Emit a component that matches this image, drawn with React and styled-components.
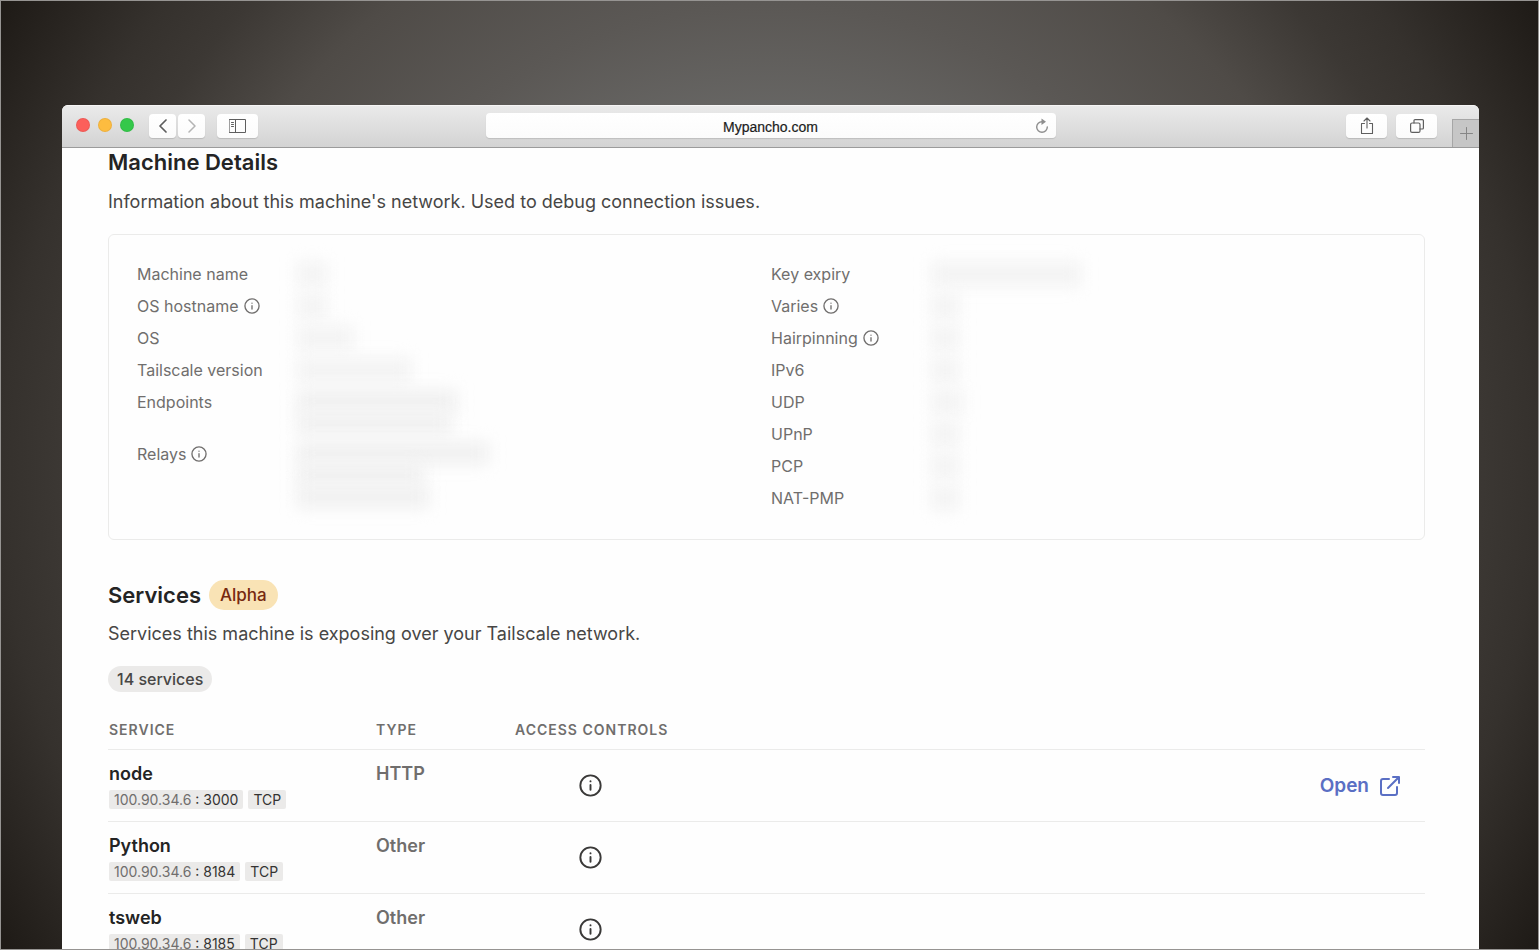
import React from "react";
import styled, { createGlobalStyle } from "styled-components";

const GlobalStyle = createGlobalStyle`
  *, *::before, *::after { box-sizing: border-box; }
  body { margin: 0; background: #2b2724; }
  button, input { font: inherit; color: inherit; }
`;

const Desktop = styled.div`
  display: flex;
  height: 100vh;
  overflow: hidden;
  padding: 104px 59px 0 61px;
  border: 1px solid #969492;
  background: radial-gradient(circle at center, #676664 40%, #5b5855 52%, #4f4b47 67%, #3c3834 78%, #35312d 85%, #1e1a16 100%);
  font-family: Inter, "Liberation Sans", sans-serif;
  color: #242424;
`;

const Window = styled.main`
  flex: 1;
  min-width: 0;
  border-radius: 6px 6px 0 0;
  background: #fefefe;
  overflow: hidden;
`;

const TitleBar = styled.header`
  display: grid;
  grid-template-columns: minmax(0, 1fr) minmax(0, 570px) minmax(0, 1fr);
  height: 43px;
  border-top: 1px solid #f6f5f5;
  border-bottom: 1px solid #9b9b9b;
  background: linear-gradient(#eaeaea, #d3d3d3);
`;

const BarGroup = styled.div`
  display: flex;
  align-items: flex-start;
  justify-content: ${(p) => (p.$end ? "flex-end" : "flex-start")};
  padding: ${(p) => (p.$end ? "0" : "8px 0 0 14px")};
`;

const Lights = styled.div`
  display: flex;
  gap: 8px;
  padding-top: 4px;
  margin-right: 15px;
`;

const Light = styled.button`
  width: 14px;
  height: 14px;
  padding: 0;
  border: 1px solid rgba(0, 0, 0, 0.06);
  border-radius: 50%;
  background: ${(p) => p.$color};
`;

const ToolButton = styled.button`
  display: flex;
  align-items: center;
  justify-content: center;
  width: ${(p) => (p.$wide ? 41 : 27)}px;
  height: 24px;
  padding: 0;
  margin: ${(p) => p.$margin || "0"};
  border: 0;
  border-radius: 4px;
  background: linear-gradient(#fff, #fbfbfb);
  box-shadow: 0 1px 1px rgba(0, 0, 0, 0.14);
  color: ${(p) => (p.$dim ? "#b4b4b4" : "#5e5e5e")};
`;

const NewTab = styled.button`
  display: flex;
  align-items: center;
  justify-content: center;
  width: 27px;
  height: 28px;
  padding: 0;
  margin: 13px 0 0 15px;
  border: 1px solid #a6a6a6;
  border-width: 1px 0 0 1px;
  background: #c6c6c6;
  color: #858585;
`;

const AddressBar = styled.div`
  display: flex;
  align-items: center;
  height: 25px;
  margin-top: 7px;
  border-radius: 4px;
  background: linear-gradient(#fff, #fbfbfb);
  box-shadow: 0 1px 1px rgba(0, 0, 0, 0.12);
`;

const Address = styled.input`
  flex: 1;
  min-width: 0;
  padding: 2px 0 0 28px;
  border: 0;
  outline: 0;
  background: none;
  text-align: center;
  font-family: "Liberation Sans", Arial, sans-serif;
  font-size: 14px;
  line-height: 18px;
  color: #1c1c1c;
  -webkit-text-stroke: 0.2px #1c1c1c;
`;

const Reload = styled.button`
  display: flex;
  justify-content: center;
  width: 28px;
  padding: 0;
  border: 0;
  background: none;
  color: #8e8e8e;
`;

const Content = styled.div`
  padding: 0 54px 0 46px;
`;

const Section = styled.section`
  margin-top: ${(p) => p.$top || 0}px;
`;

const Heading = styled.div`
  display: flex;
  align-items: center;
  gap: 8px;
`;

const Title = styled.h2`
  margin: 0;
  font-size: 22px;
  font-weight: 600;
  line-height: 28px;
`;

const Badge = styled.span`
  padding: 0 11px;
  border-radius: 15px;
  background: #f9e3b5;
  color: #77290f;
  font-size: 17px;
  font-weight: 500;
  line-height: 30px;
`;

const Description = styled.p`
  margin: ${(p) => p.$top}px 0 18px;
  color: #474645;
  font-size: 18px;
  line-height: 28px;
`;

const Card = styled.div`
  display: grid;
  grid-template-columns: 1fr 1fr;
  gap: 9px;
  padding: 27px 28px 29px;
  border: 1px solid #ebebea;
  border-radius: 6px;
`;

const DetailList = styled.dl`
  display: flex;
  flex-direction: column;
  gap: 8px;
  margin: 0;
`;

const Detail = styled.div`
  display: flex;
`;

const Label = styled.dt`
  display: flex;
  align-items: center;
  gap: 5px;
  flex: 0 0 160px;
  height: 24px;
  color: #706e6d;
  font-size: 16px;
  line-height: 24px;
`;

const Value = styled.dd`
  display: flex;
  flex-direction: column;
  margin: 0;
`;

const Redacted = styled.span`
  width: ${(p) => p.$width}px;
  height: ${(p) => (p.$multi ? 22 : 24)}px;
  background: ${(p) => (p.$multi ? "#f0f0f0" : "#f3f3f3")};
  filter: blur(8px);
`;

const CountPill = styled.span`
  display: inline-block;
  vertical-align: top;
  padding: 0 9px;
  border-radius: 13px;
  background: #ebeae9;
  color: #474645;
  font-size: 16px;
  font-weight: 500;
  line-height: 26px;
`;

const Table = styled.table`
  width: 100%;
  margin-top: 16px;
  border-collapse: separate;
  border-spacing: 0;
  table-layout: fixed;
`;

const HeadCell = styled.th`
  width: ${(p) => p.$width || "auto"};
  height: 42px;
  padding: 2px 0 0 1px;
  border-bottom: 1px solid #ebebea;
  color: #706e6d;
  text-align: left;
  font-size: 14px;
  font-weight: 600;
  letter-spacing: 1px;
  line-height: 20px;
  white-space: nowrap;
`;

const Cell = styled.td`
  height: 72px;
  padding: ${(p) => (p.$middle ? "0" : "12px 0 0 1px")};
  border-bottom: 1px solid #ebebea;
  vertical-align: ${(p) => (p.$middle ? "middle" : "top")};
  text-align: ${(p) => p.$align || "left"};
`;

const ServiceName = styled.div`
  font-size: 18px;
  font-weight: 600;
  line-height: 24px;
`;

const ServiceType = styled(ServiceName)`
  color: #706e6d;
`;

const Tags = styled.div`
  display: flex;
  gap: 5px;
  margin-top: 4px;
`;

const Tag = styled.span`
  padding: 0 5px;
  border-radius: 2px;
  background: #ebeae9;
  color: #343332;
  font-size: 14px;
  line-height: 19px;
  white-space: pre;
`;

const Host = styled.span`
  color: #706e6d;
`;

const InfoButton = styled.button`
  display: inline-flex;
  vertical-align: middle;
  padding: 0;
  border: 0;
  background: none;
  color: ${(p) => (p.$dark ? "#3a3938" : "#706e6d")};
`;

const OpenLink = styled.a`
  display: inline-flex;
  align-items: center;
  gap: 10px;
  padding-right: 24px;
  color: #5a6fc4;
  font-size: 19px;
  font-weight: 600;
  line-height: 24px;
  text-decoration: none;
`;

const Icon = ({ size = 16, width, stroke = 1, box, children }) => (
  <svg
    width={width || size}
    height={size}
    viewBox={box || `0 0 ${width || size} ${size}`}
    fill="none"
    stroke="currentColor"
    strokeWidth={stroke}
    strokeLinecap="round"
    strokeLinejoin="round"
    aria-hidden="true"
  >
    {children}
  </svg>
);

const Info = ({ size, dark, label }) => (
  <InfoButton type="button" aria-label={label} $dark={dark}>
    <Icon size={size} box="0 0 24 24" stroke={2}>
      <circle cx="12" cy="12" r="10.6" />
      <path d="M12 11.5v5M12 7.6v.1" />
    </Icon>
  </InfoButton>
);

const leftDetails = [
  { label: "Machine name", bars: [30] },
  { label: "OS hostname", info: true, bars: [30] },
  { label: "OS", bars: [56] },
  { label: "Tailscale version", bars: [114] },
  { label: "Endpoints", multi: true, bars: [160, 154] },
  { label: "Relays", info: true, multi: true, bars: [192, 126, 132] },
];

const rightDetails = [
  { label: "Key expiry", bars: [150] },
  { label: "Varies", info: true, bars: [28] },
  { label: "Hairpinning", info: true, bars: [28] },
  { label: "IPv6", bars: [28] },
  { label: "UDP", bars: [32] },
  { label: "UPnP", bars: [28] },
  { label: "PCP", bars: [28] },
  { label: "NAT-PMP", bars: [28] },
];

const services = [
  { name: "node", type: "HTTP", port: "3000", open: true },
  { name: "Python", type: "Other", port: "8184" },
  { name: "tsweb", type: "Other", port: "8185" },
];

const Details = ({ items }) => (
  <DetailList>
    {items.map((item) => (
      <Detail key={item.label}>
        <Label>
          {item.label}
          {item.info && <Info size={16} label={`About ${item.label}`} />}
        </Label>
        <Value>
          {item.bars.map((width, i) => (
            <Redacted key={i} $width={width} $multi={item.multi} />
          ))}
        </Value>
      </Detail>
    ))}
  </DetailList>
);

export default function App() {
  return (
    <>
      <GlobalStyle />
      <Desktop>
        <Window>
          <TitleBar>
            <BarGroup>
              <Lights>
                <Light $color="#fc5f5b" aria-label="Close" />
                <Light $color="#fdbc40" aria-label="Minimize" />
                <Light $color="#34c84a" aria-label="Zoom" />
              </Lights>
              <ToolButton aria-label="Back">
                <Icon width={10} size={14} stroke={1.7}>
                  <path d="M8 1 2 7l6 6" />
                </Icon>
              </ToolButton>
              <ToolButton aria-label="Forward" $dim $margin="0 12px 0 2px">
                <Icon width={10} size={14} stroke={1.5}>
                  <path d="m2 1 6 6-6 6" />
                </Icon>
              </ToolButton>
              <ToolButton aria-label="Sidebar" $wide>
                <Icon width={17} size={14}>
                  <path d="M.5.5h16v13H.5zM6.5.5v13M2.5 3.5h2M2.5 5.5h2M2.5 7.5h2" />
                </Icon>
              </ToolButton>
            </BarGroup>
            <AddressBar>
              <Address aria-label="Address" defaultValue="Mypancho.com" />
              <Reload aria-label="Reload">
                <Icon width={14} size={16} stroke={1.4}>
                  <path d="M7 3.700A5.300 5.300 0 1 0 12.300 9" />
                  <path d="M6.500.5v6.400l4.500-3.200z" fill="currentColor" stroke="none" />
                </Icon>
              </Reload>
            </AddressBar>
            <BarGroup $end>
              <ToolButton aria-label="Share" $wide $margin="8px 9px 0 0">
                <Icon width={14} size={18} stroke={1.1}>
                  <path d="M4.5 6.500h-3v10h11v-10h-3M7 11V1M4 4l3-3 3 3" />
                </Icon>
              </ToolButton>
              <ToolButton aria-label="Show all tabs" $wide $margin="8px 0 0 0">
                <Icon width={14} size={14} stroke={1.2}>
                  <rect x=".6" y="4" width="9.400" height="9.400" rx="1.500" />
                  <path d="M4 4V1.600a1 1 0 0 1 1-1h7.400a1 1 0 0 1 1 1V9a1 1 0 0 1-1 1H10" />
                </Icon>
              </ToolButton>
              <NewTab aria-label="New tab">
                <Icon size={13}>
                  <path d="M6.500.5v12M.5 6.500h12" />
                </Icon>
              </NewTab>
            </BarGroup>
          </TitleBar>

          <Content>
            <Section>
              <Title>Machine Details</Title>
              <Description $top={12}>
                Information about this machine's network. Used to debug connection issues.
              </Description>
              <Card>
                <Details items={leftDetails} />
                <Details items={rightDetails} />
              </Card>
            </Section>

            <Section $top={40}>
              <Heading>
                <Title>Services</Title>
                <Badge>Alpha</Badge>
              </Heading>
              <Description $top={10}>
                Services this machine is exposing over your Tailscale network.
              </Description>
              <CountPill>14 services</CountPill>
              <Table>
                <thead>
                  <tr>
                    <HeadCell scope="col" $width="267px">SERVICE</HeadCell>
                    <HeadCell scope="col" $width="139px">TYPE</HeadCell>
                    <HeadCell scope="col" $width="153px">ACCESS CONTROLS</HeadCell>
                    <HeadCell scope="col" aria-label="Actions" />
                  </tr>
                </thead>
                <tbody>
                  {services.map((s) => (
                    <tr key={s.name}>
                      <Cell>
                        <ServiceName>{s.name}</ServiceName>
                        <Tags>
                          <Tag>
                            <Host>100.90.34.6</Host> : {s.port}
                          </Tag>
                          <Tag>TCP</Tag>
                        </Tags>
                      </Cell>
                      <Cell>
                        <ServiceType>{s.type}</ServiceType>
                      </Cell>
                      <Cell $middle $align="center">
                        <Info size={23} dark label={`Access controls for ${s.name}`} />
                      </Cell>
                      <Cell $middle $align="right">
                        {s.open && (
                          <OpenLink href="#open">
                            Open
                            <Icon size={22} stroke={2}>
                              <path d="M10 4H4a2 2 0 0 0-2 2v12a2 2 0 0 0 2 2h12a2 2 0 0 0 2-2v-6M14 2h6v6M20 2 9 13" />
                            </Icon>
                          </OpenLink>
                        )}
                      </Cell>
                    </tr>
                  ))}
                </tbody>
              </Table>
            </Section>
          </Content>
        </Window>
      </Desktop>
    </>
  );
}
